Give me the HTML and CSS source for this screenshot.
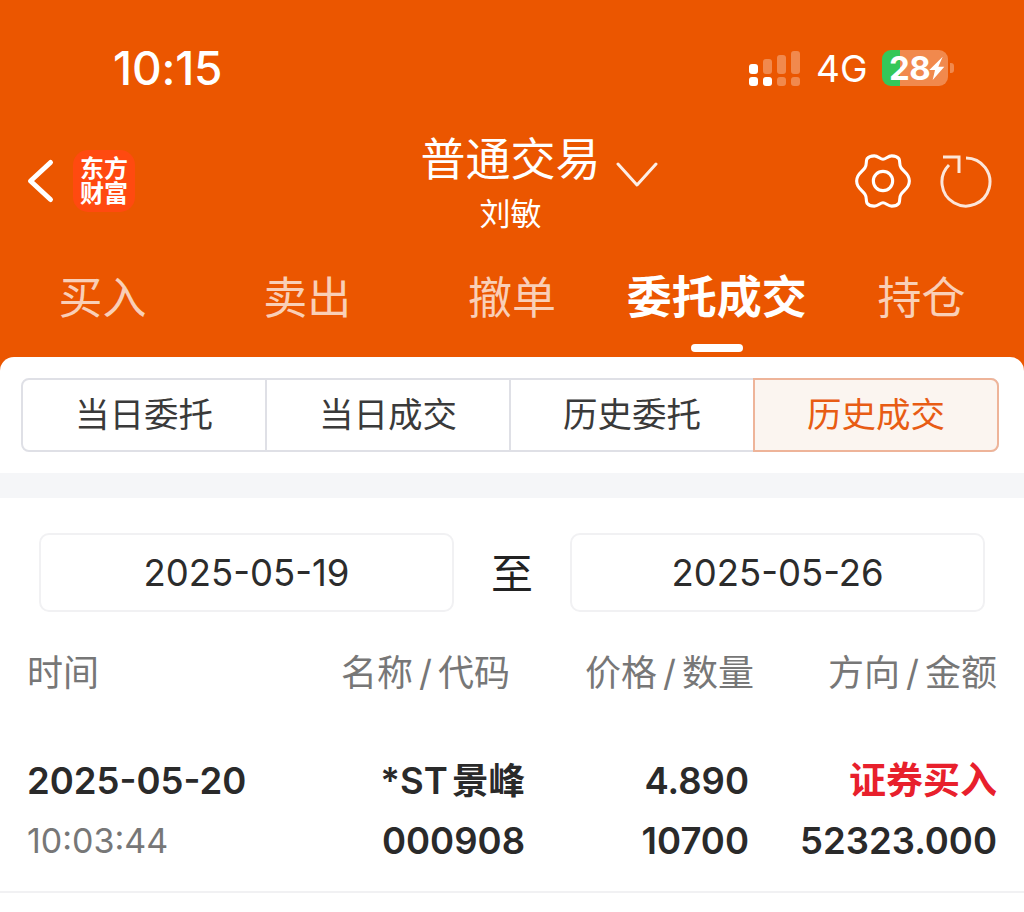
FILE: index.html
```html
<!DOCTYPE html>
<html lang="zh">
<head>
  <meta charset="UTF-8" />
  <title>普通交易</title>
  <link rel="stylesheet" href="styles.css">
</head>
<body>

<div class="page">
  <div class="status-bar">
    <span class="clock">10:15</span>
    <div class="status-right">
      <svg class="signal" width="52" height="38" viewBox="0 0 52 38">
        <rect x="1" y="14" width="9" height="10" rx="3" fill="#fff"/>
        <rect x="1" y="27" width="9" height="9" rx="3" fill="#fff"/>
        <rect x="15" y="27" width="9" height="9" rx="3" fill="#fff"/>
        <rect x="15" y="9" width="9" height="15" rx="3" fill="#fff" opacity=".3"/>
        <rect x="29" y="27" width="9" height="9" rx="3" fill="#fff" opacity=".3"/>
        <rect x="29" y="5" width="9" height="19" rx="3" fill="#fff" opacity=".3"/>
        <rect x="43" y="27" width="9" height="9" rx="3" fill="#fff" opacity=".3"/>
        <rect x="43" y="1" width="9" height="23" rx="3" fill="#fff" opacity=".3"/>
      </svg>
      <span class="network">4G</span>
      <div class="battery">
        <span class="battery-num">28</span>
        <svg class="bolt" width="16" height="28" viewBox="0 0 16 28"><path d="M13.7 2.7.3 16H6L3.7 26l11.6-13.300H9.300z" fill="#fff"/></svg>
      </div>
      <span class="battery-tip"></span>
    </div>
  </div>

  <div class="title-row">
    <div class="title-left">
      <svg width="32" height="50" viewBox="0 0 32 50" class="back"><path d="M25.500 6.500 5.500 25l20 18.500" fill="none" stroke="#fff" stroke-width="5" stroke-linecap="round" stroke-linejoin="round"/></svg>
      <div class="logo">东方财富</div>
    </div>
    <div class="title-center">
      <div class="title-line">
        <span class="title">普通交易</span>
        <svg class="title-arrow" width="42" height="26" viewBox="0 0 42 26"><path d="M2 2l19 21L40 2" fill="none" stroke="#fff" stroke-width="3" stroke-linecap="round" stroke-linejoin="round" opacity=".9"/></svg>
      </div>
      <div class="subtitle">刘敏</div>
    </div>
    <div class="title-right">
      <svg width="58" height="58" viewBox="0 0 60 60">
        <path d="M30 7.500C33 7.500 35 4 39 4C42 4 45 5 46.500 7C48 10 46.500 13 48.500 16C50 19 54 21 56 25C57.500 28 57.500 32 56 35C54 39 50 41 48.500 44C46.500 47 48 50 46.500 53C45 55 42 56 39 56C35 56 33 52.500 30 52.500C27 52.500 25 56 21 56C18 56 15 55 13.500 53C12 50 13.500 47 11.500 44C10 41 6 39 4 35C2.500 32 2.500 28 4 25C6 21 10 19 11.500 16C13.500 13 12 10 13.500 7C15 5 18 4 21 4C25 4 27 7.500 30 7.500Z" fill="none" stroke="#fff" stroke-width="3.200" stroke-linejoin="round"/>
        <circle cx="30" cy="30" r="10" fill="none" stroke="#fff" stroke-width="3.200"/>
      </svg>
      <svg width="54" height="54" viewBox="0 0 54 54">
        <path d="M26 4A24 24 0 1 1 9 11" fill="none" stroke="#fff" stroke-width="3" opacity=".85"/>
        <path d="M3 3h16v16" fill="none" stroke="#fff" stroke-width="3" opacity=".85"/>
      </svg>
    </div>
  </div>

  <div class="tabs">
    <div class="tab">买入</div>
    <div class="tab">卖出</div>
    <div class="tab">撤单</div>
    <div class="tab active">委托成交</div>
    <div class="tab">持仓</div>
  </div>

  <div class="panel">
    <div class="segment-wrap">
      <div class="segment">
        <div class="seg-item">当日委托</div>
        <div class="seg-item">当日成交</div>
        <div class="seg-item">历史委托</div>
        <div class="seg-item selected">历史成交</div>
      </div>
    </div>
    <div class="band"></div>

    <div class="dates">
      <div class="date-box">2025-05-19</div>
      <div class="date-to">至</div>
      <div class="date-box">2025-05-26</div>
    </div>

    <div class="table-head">
      <div>时间</div>
      <div class="right">名称<span class="slash">/</span>代码</div>
      <div class="right">价格<span class="slash">/</span>数量</div>
      <div class="right">方向<span class="slash">/</span>金额</div>
    </div>

    <div class="trade">
      <div class="trade-line">
        <div class="strong">2025-05-20</div>
        <div class="strong right stock">*ST 景峰</div>
        <div class="strong right">4.890</div>
        <div class="strong right buy">证券买入</div>
      </div>
      <div class="trade-line">
        <div class="muted">10:03:44</div>
        <div class="strong right">000908</div>
        <div class="strong right">10700</div>
        <div class="strong right">52323.000</div>
      </div>
    </div>
  </div>
</div>

</body>
</html>
```

FILE: styles.css
```css
* {
  box-sizing: border-box;
}
html, body {
  margin: 0;
  padding: 0;
}
body {
  font-family: Inter, "Noto Sans CJK SC", sans-serif;
  background-color: #eb5600;
}
.page {
  width: 1024px;
  height: 912px;
  overflow: hidden;
  display: flex;
  flex-direction: column;
  color: #fff;
}

/* status bar */
.status-bar {
  height: 136px;
  padding: 0 70px 0 113px;
  display: flex;
  justify-content: space-between;
  align-items: center;
}
.clock {
  font-size: 46px;
  font-weight: 500;
  letter-spacing: -0.2px;
}
.status-right {
  display: flex;
  align-items: center;
}
.signal {
  margin-top: 1px;
}
.network {
  margin-left: 16px;
  font-size: 37px;
  width: 66px;
  color: #fff;
}
.battery {
  width: 66px;
  height: 36px;
  border-radius: 9px;
  background: linear-gradient(to right, #34c759 0, #34c759 18px, rgba(255,255,255,0.3) 18px);
  display: flex;
  align-items: center;
  padding-left: 7px;
}
.battery-num {
  font-size: 33px;
  font-weight: 700;
  letter-spacing: -0.5px;
}
.bolt {
  flex-shrink: 0;
  margin-left: -1px;
}
.battery-tip {
  width: 4px;
  height: 10px;
  margin-left: 2px;
  border-radius: 0 3px 3px 0;
  background: rgba(255,255,255,0.3);
}

/* title */
.title-row {
  height: 108px;
  display: grid;
  grid-template-columns: 1fr auto 1fr;
}
.title-left {
  display: flex;
  align-items: center;
  padding-left: 25px;
  height: 90px;
}
.back {
  flex-shrink: 0;
}
.logo {
  flex-shrink: 0;
  width: 62px;
  height: 62px;
  margin-left: 16px;
  padding: 6px 6px 0;
  border-radius: 15px;
  background-color: #ff4a10;
  font-size: 24px;
  line-height: 25px;
  font-weight: 700;
  text-align: center;
}
.title-center {
  text-align: center;
  padding-right: 3px;
}
.title-line {
  display: flex;
  align-items: center;
  height: 48px;
}
.title {
  font-size: 45px;
  line-height: 48px;
}
.title-arrow {
  margin-left: 15px;
  margin-right: -57px;
  margin-top: 30px;
}
.subtitle {
  font-size: 31px;
  line-height: 44px;
  margin-top: 8px;
}
.title-right {
  display: flex;
  justify-content: flex-end;
  align-items: center;
  height: 90px;
  padding-right: 30px;
  gap: 28px;
}

/* tabs */
.tabs {
  height: 113px;
  display: grid;
  grid-template-columns: repeat(5, 1fr);
}
.tab {
  font-size: 44px;
  line-height: 108px;
  text-align: center;
  color: rgba(255,255,255,0.72);
  white-space: nowrap;
  position: relative;
}
.tab.active {
  font-size: 45px;
  font-weight: 700;
  color: #fff;
}
.tab.active::after {
  content: "";
  position: absolute;
  left: 50%;
  bottom: 5px;
  width: 52px;
  height: 8px;
  margin-left: -26px;
  border-radius: 4px;
  background: #fff;
}

/* panel */
.panel {
  flex: 1;
  background: #fff;
  border-radius: 14px 14px 0 0;
  color: #333;
}
.segment-wrap {
  padding: 21px 25px 21px 21px;
}
.segment {
  height: 74px;
  display: grid;
  grid-template-columns: 242px 244px 244px 1fr;
  border: 2px solid #dfe0e6;
  border-radius: 8px;
}
.seg-item {
  font-size: 34.500px;
  line-height: 70px;
  text-align: center;
  border-left: 2px solid #dfe0e6;
  color: #3a3a3a;
}
.seg-item:first-child {
  border-left: none;
}
.seg-item.selected {
  margin: -2px -2px -2px 0;
  height: 74px;
  border: 2px solid #eeb499;
  border-radius: 0 8px 8px 0;
  background: #fbf5f0;
  color: #e85c14;
}
.band {
  height: 25px;
  background: #f5f6f8;
}
.dates {
  display: grid;
  grid-template-columns: 415px 116px 415px;
  padding: 35px 0 0 39px;
  align-items: center;
}
.date-box {
  height: 79px;
  border: 2px solid #f1f1f3;
  border-radius: 10px;
  font-size: 36.500px;
  line-height: 77px;
  text-align: center;
  color: #2c2c2c;
}
.date-to {
  font-size: 42px;
  text-align: center;
  color: #222;
  margin-top: -4px;
}

/* table */
.table-head {
  display: grid;
  grid-template-columns: 270px 213px 244px 243px;
  padding: 37px 0 0 27px;
  font-size: 36px;
  line-height: 48px;
  color: #777;
}
.slash {
  margin: 0 6px;
}
.right {
  text-align: right;
}
.trade {
  padding: 54px 27px 20px 27px;
  border-bottom: 2px solid #f1f1f3;
}
.trade-line {
  display: grid;
  grid-template-columns: 270px 228px 224px 248px;
  height: 60px;
  line-height: 60px;
  font-size: 36.500px;
}
.strong {
  font-weight: 600;
  color: #2a2a2a;
  white-space: nowrap;
}
.stock {
  word-spacing: -5px;
}
.muted {
  color: #777;
  font-size: 34px;
}
.buy {
  color: #e8202c;
  font-size: 37px;
}
```
